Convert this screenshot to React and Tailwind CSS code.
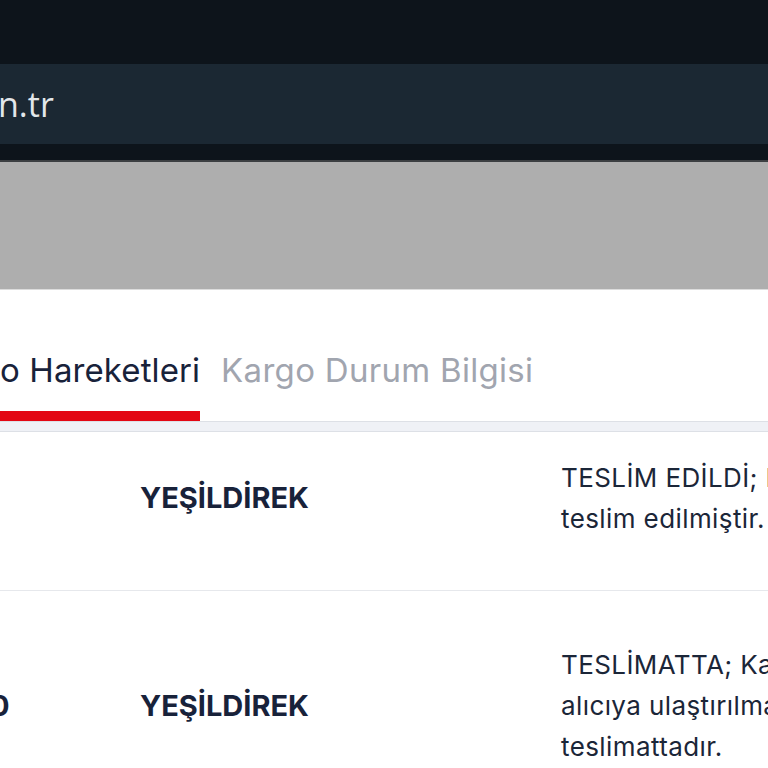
import React from "react";

const rows = [
  {
    time: "",
    place: "YEŞİLDİREK",
    lines: ["TESLİM EDİLDİ; Kargonuz", "teslim edilmiştir."],
    height: "h-[159px] pb-[26px]",
  },
  {
    time: "0",
    place: "YEŞİLDİREK",
    lines: ["TESLİMATTA; Kargonuz", "alıcıya ulaştırılmak üzere", "teslimattadır."],
    height: "h-[230px]",
  },
];

export default function App() {
  return (
    <div className="w-[768px] h-[768px] overflow-hidden bg-white font-['Inter',sans-serif]">
      {/* browser chrome */}
      <div className="h-[64px] bg-[#0d141b]" />
      <div className="h-[80px] bg-[#1b2833] flex items-center">
        <span className="-ml-[2px] text-[34px] text-[#e3e7ea] font-['Open_Sans',sans-serif] leading-none">
          n.tr
        </span>
      </div>
      <div className="h-[18px] bg-[#0d141b] border-b-2 border-[#3c3f42]" />
      <div className="h-[128px] bg-[#aeaeae] border-b border-[#dcdcdc]" />

      {/* tabs */}
      <div className="h-[131px] flex items-end gap-[21px]">
        <div className="flex flex-col">
          <span className="text-[33px] leading-[40px] tracking-[0.1px] text-[#18223a] whitespace-nowrap">
            o Hareketleri
          </span>
          <div className="mt-[21px] h-[10px] bg-[#e30613]" />
        </div>
        <div className="flex flex-col">
          <span className="text-[33px] leading-[40px] tracking-[0.3px] text-[#a1a5af] whitespace-nowrap">
            Kargo Durum Bilgisi
          </span>
          <div className="mt-[21px] h-[10px]" />
        </div>
      </div>
      <div className="h-[11px] bg-[#eff1f6] border-y border-[#dde0e6]" />

      {/* rows */}
      {rows.map((r, i) => (
        <div
          key={i}
          className={`${r.height} grid grid-cols-[140px_421px_1fr] items-center border-b border-[#e6e8ec]`}
        >
          <div className="overflow-visible">
            {r.time && (
              <span className="block -ml-[10px] text-[29px] font-bold text-[#18223a]">
                {r.time}
              </span>
            )}
          </div>
          <div className="text-[29px] font-bold text-[#18223a]">
            {r.place}
          </div>
          <div className="text-[26px] leading-[41px] tracking-[0.4px] text-[#1b2638] whitespace-nowrap">
            {r.lines.map((l, j) => (
              <div key={j}>{l}</div>
            ))}
          </div>
        </div>
      ))}
    </div>
  );
}
